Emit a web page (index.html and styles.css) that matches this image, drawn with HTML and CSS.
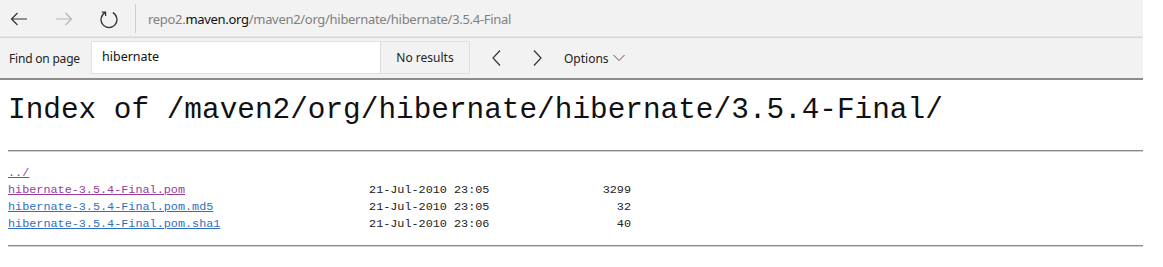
FILE: index.html
```html
<!DOCTYPE html>
<html lang="en">

<head>
    <meta charset="UTF-8">
    <title>Index of /maven2/org/hibernate/hibernate/3.5.4-Final/</title>
    <link rel="stylesheet" href="styles.css">
</head>

<body>
    <div class="browser">
        <div class="addressbar">
            <span class="navbtn">
                <svg width="20" height="20" viewBox="0 0 20 20">
                    <path d="M18 10H2.5M8.5 4L2.5 10L8.5 16" fill="none" stroke="#333" stroke-width="1.2" />
                </svg>
            </span>
            <span class="navbtn">
                <svg width="20" height="20" viewBox="0 0 20 20">
                    <path d="M2 10H17.5M11.5 4L17.5 10L11.5 16" fill="none" stroke="#b4b4b4" stroke-width="1.2" />
                </svg>
            </span>
            <span class="navbtn">
                <svg width="20" height="20" viewBox="0 0 20 20">
                    <path d="M6.2 3.6A8 8 0 1 0 13.8 3.6" fill="none" stroke="#333" stroke-width="1.2" />
                    <path d="M2.8 3.2H6.6V7" fill="none" stroke="#333" stroke-width="1.2" />
                </svg>
            </span>
            <span class="divider"></span>
            <span class="url">repo2.<b>maven.org</b>/maven2/org/hibernate/hibernate/3.5.4-Final</span>
        </div>
        <div class="findbar">
            <span class="find-label">Find on page</span>
            <div class="find-box">
                <span class="find-input">hibernate</span>
                <span class="find-count">No results</span>
            </div>
            <span class="chevron">
                <svg width="12" height="18" viewBox="0 0 12 18">
                    <path d="M10 1.5L3 9L10 16.5" fill="none" stroke="#333" stroke-width="1.2" />
                </svg>
            </span>
            <span class="chevron">
                <svg width="12" height="18" viewBox="0 0 12 18">
                    <path d="M2 1.5L9 9L2 16.5" fill="none" stroke="#333" stroke-width="1.2" />
                </svg>
            </span>
            <span class="options">Options
                <svg width="12" height="8" viewBox="0 0 12 8">
                    <path d="M0.5 1L6 6.5L11.5 1" fill="none" stroke="#555" stroke-width="1" />
                </svg>
            </span>
        </div>
    </div>

    <div class="page">
        <h1>Index of /maven2/org/hibernate/hibernate/3.5.4-Final/</h1>
        <hr>
        <pre><a class="visited" href="#">../</a>
<a class="visited" href="#">hibernate-3.5.4-Final.pom</a>                          21-Jul-2010 23:05                3299
<a href="#">hibernate-3.5.4-Final.pom.md5</a>                      21-Jul-2010 23:05                  32
<a href="#">hibernate-3.5.4-Final.pom.sha1</a>                     21-Jul-2010 23:06                  40
</pre>
        <hr>
    </div>
</body>

</html>
```

FILE: styles.css
```css
body {
    margin: 0;
    background: #fff;
    font-family: "Segoe UI", "Noto Sans", "Liberation Sans", sans-serif;
    overflow: hidden;
}

.browser {
    width: 1143px;
    background-color: #f2f2f2;
    border-bottom: 2px solid #8c8c8c;
}

.addressbar {
    display: flex;
    align-items: center;
    height: 37px;
    border-bottom: 1px solid #d6d6d6;
    box-shadow: 0 -5px 0 -4px #e6e6e6 inset;
}

.navbtn {
    display: flex;
    width: 20px;
    height: 20px;
    margin-left: 9px;
    margin-right: 16px;
}

.navbtn svg {
    display: block;
}

.divider {
    width: 1px;
    height: 29px;
    margin-right: 12px;
    background-color: #cfcfcf;
}

.url {
    font-size: 13px;
    color: #808080;
    letter-spacing: -0.3px;
}

.url b {
    font-weight: normal;
    color: #111;
}

.findbar {
    display: flex;
    align-items: center;
    height: 40px;
}

.find-label {
    font-size: 12px;
    color: #222;
    margin-left: 9px;
    width: 82px;
    letter-spacing: -0.2px;
}

.find-box {
    display: flex;
    height: 31px;
    margin-top: -1px;
    border: 1px solid #e0e0e0;
}

.find-input {
    width: 278px;
    padding-left: 10px;
    background-color: #fff;
    font-size: 12.5px;
    line-height: 29px;
    color: #111;
}

.find-count {
    width: 88px;
    border-left: 1px solid #dcdcdc;
    text-align: center;
    font-size: 12px;
    line-height: 31px;
    color: #222;
}

.chevron {
    display: flex;
    margin-left: 20px;
    margin-right: 2px;
}

.chevron + .chevron {
    margin-left: 28px;
}

.options {
    margin-left: 18px;
    font-size: 12px;
    color: #222;
    display: flex;
    align-items: center;
    gap: 4px;
}

.page {
    width: 1135px;
    padding-left: 8px;
}

h1 {
    font-family: "Liberation Mono", monospace;
    font-weight: normal;
    font-size: 29.4px;
    line-height: 36px;
    margin: 13px 0 21px;
    color: #111;
}

hr {
    margin: 0;
    border: 0;
    border-top: 1px solid #8a8a8a;
    border-bottom: 1px solid #d0d0d0;
}

pre {
    font-family: "Liberation Mono", monospace;
    font-size: 11.8px;
    line-height: 17px;
    margin: 13px 0 12px;
    color: #222;
}

a {
    color: #2f6fc2;
}

a.visited {
    color: #9a3a9e;
}
```
